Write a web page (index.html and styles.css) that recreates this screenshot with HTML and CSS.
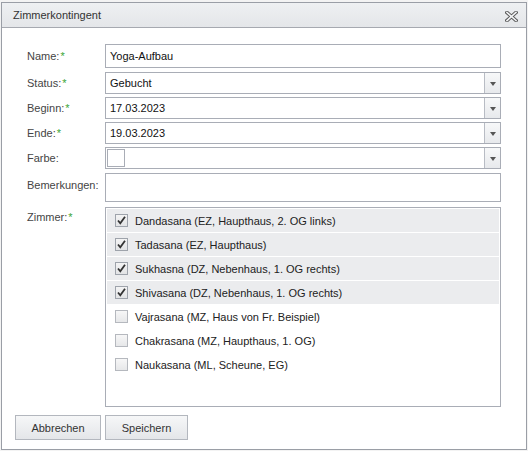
FILE: index.html
```html
<!DOCTYPE html>
<html lang="de">
<head>
<meta charset="utf-8">
<title>Zimmerkontingent</title>
<link rel="stylesheet" href="styles.css">
</head>
<body>
<div class="dialog">
  <div class="header">
    <span class="title">Zimmerkontingent</span>
    <span class="close">
      <svg width="13" height="11" viewBox="0 0 13 11">
        <path d="M2 1.5 L11 9.5 M11 1.5 L2 9.5" stroke="#5a5a5a" stroke-width="3.6" stroke-linecap="square" fill="none"/>
        <path d="M2 1.5 L11 9.5 M11 1.5 L2 9.5" stroke="#f2f3f5" stroke-width="1.6" stroke-linecap="square" fill="none"/>
      </svg>
    </span>
  </div>
  <div class="body">
    <div class="row row-name">
      <label class="lbl">Name:<span class="req">*</span></label>
      <div class="field text">Yoga-Aufbau</div>
    </div>
    <div class="row">
      <label class="lbl">Status:<span class="req">*</span></label>
      <div class="field select"><span class="val">Gebucht</span><span class="trigger"><i></i></span></div>
    </div>
    <div class="row">
      <label class="lbl">Beginn:<span class="req">*</span></label>
      <div class="field select"><span class="val">17.03.2023</span><span class="trigger"><i></i></span></div>
    </div>
    <div class="row">
      <label class="lbl">Ende:<span class="req">*</span></label>
      <div class="field select"><span class="val">19.03.2023</span><span class="trigger"><i></i></span></div>
    </div>
    <div class="row">
      <label class="lbl">Farbe:</label>
      <div class="field select color"><span class="swatch"></span><span class="val"></span><span class="trigger"><i></i></span></div>
    </div>
    <div class="row row-area">
      <label class="lbl lbl-top">Bemerkungen:</label>
      <div class="field area"></div>
    </div>
    <div class="row row-list">
      <label class="lbl lbl-list">Zimmer:<span class="req">*</span></label>
      <div class="field list">
        <div class="item on"><span class="cb"><svg width="11" height="11" viewBox="0 0 11 11"><path d="M2 5.5 L4.3 8.3 L9 1.8" stroke="#333" stroke-width="1.8" fill="none"/></svg></span>Dandasana (EZ, Haupthaus, 2. OG links)</div>
        <div class="item on"><span class="cb"><svg width="11" height="11" viewBox="0 0 11 11"><path d="M2 5.5 L4.3 8.3 L9 1.8" stroke="#333" stroke-width="1.8" fill="none"/></svg></span>Tadasana (EZ, Haupthaus)</div>
        <div class="item on"><span class="cb"><svg width="11" height="11" viewBox="0 0 11 11"><path d="M2 5.5 L4.3 8.3 L9 1.8" stroke="#333" stroke-width="1.8" fill="none"/></svg></span>Sukhasna (DZ, Nebenhaus, 1. OG rechts)</div>
        <div class="item on"><span class="cb"><svg width="11" height="11" viewBox="0 0 11 11"><path d="M2 5.5 L4.3 8.3 L9 1.8" stroke="#333" stroke-width="1.8" fill="none"/></svg></span>Shivasana (DZ, Nebenhaus, 1. OG rechts)</div>
        <div class="item"><span class="cb"></span>Vajrasana (MZ, Haus von Fr. Beispiel)</div>
        <div class="item"><span class="cb"></span>Chakrasana (MZ, Haupthaus, 1. OG)</div>
        <div class="item"><span class="cb"></span>Naukasana (ML, Scheune, EG)</div>
      </div>
    </div>
    <div class="buttons">
      <button class="btn btn-cancel">Abbrechen</button>
      <button class="btn btn-save">Speichern</button>
    </div>
  </div>
</div>
</body>
</html>
```
FILE: styles.css
```css
html, body {
  margin: 0;
  padding: 0;
  background: #f3f3f3;
}
body {
  font-family: "Liberation Sans", Arial, sans-serif;
  font-size: 11px;
  color: #333;
  padding: 2px 1px 0 1px;
}
.dialog {
  width: 524px;
  height: 446px;
  border: 1px solid #9a9ea6;
  background: #fff;
  display: flex;
  flex-direction: column;
}
.header {
  height: 24px;
  border-bottom: 1px solid #a6a9b0;
  background: linear-gradient(#eef0f2, #e4e6e9);
  display: flex;
  align-items: center;
  justify-content: space-between;
  padding: 0 8px 0 11px;
}
.title {
  color: #333;
  font-size: 11px;
}
.close {
  display: flex;
  margin-top: 3px;
}
.body {
  flex: 1;
  padding: 16px 25px 0 25px;
  display: flex;
  flex-direction: column;
}
.row {
  display: flex;
  align-items: center;
  margin-bottom: 3px;
}
.row-name {
  margin-bottom: 4px;
}
.lbl {
  width: 78px;
  flex: none;
  color: #444;
  font-size: 11px;
}
.req {
  color: #3aa537;
  margin-left: 1px;
}
.field {
  flex: 1;
  border: 1px solid #a9adb6;
  box-sizing: border-box;
  background: #fff;
  color: #111;
}
.text {
  height: 24px;
  line-height: 22px;
  padding-left: 4px;
}
.select {
  height: 22px;
  display: flex;
  align-items: center;
  padding-left: 4px;
}
.select .val {
  flex: 1;
}
.trigger {
  width: 15px;
  height: 20px;
  border-left: 1px solid #b8bcc4;
  background: linear-gradient(#f7f8f9, #e7e9ec);
  display: flex;
  align-items: center;
  justify-content: center;
}
.trigger i {
  width: 0;
  height: 0;
  border-left: 3.5px solid transparent;
  border-right: 3.5px solid transparent;
  border-top: 4px solid #555;
  margin-top: 1px;
}
.color {
  padding-left: 1px;
}
.swatch {
  width: 16px;
  height: 16px;
  border: 1px solid #a9adb6;
  background: #fff;
  margin-right: 2px;
}
.row-area {
  align-items: flex-start;
  margin-top: 1px;
  margin-bottom: 5px;
}
.lbl-top {
  padding-top: 6px;
}
.area {
  height: 29px;
}
.row-list {
  align-items: flex-start;
  margin-bottom: 0;
}
.lbl-list {
  padding-top: 4px;
}
.list {
  height: 200px;
  padding: 1px 1px 0 1px;
}
.item {
  height: 23px;
  margin-bottom: 1px;
  display: flex;
  align-items: center;
  padding-left: 8px;
  color: #222;
}
.item.on {
  background: #ebecee;
}
.cb {
  width: 11px;
  height: 11px;
  border: 1px solid #9ea3ab;
  background: linear-gradient(#f4f4f4, #e2e3e5);
  margin-right: 7px;
  display: flex;
  flex: none;
}
.item:not(.on) .cb {
  border-color: #b5b8be;
  background: linear-gradient(#f7f7f7, #e6e7e9);
}
.buttons {
  display: flex;
  gap: 4px;
  margin-top: 8px;
  margin-left: -12px;
}
.btn {
  height: 25px;
  border: 1px solid #b3b7be;
  background: linear-gradient(#f6f7f8, #e4e6e9);
  font-family: "Liberation Sans", Arial, sans-serif;
  font-size: 11px;
  color: #333;
  padding: 0;
}
.btn-cancel {
  width: 86px;
}
.btn-save {
  width: 83px;
}
```
